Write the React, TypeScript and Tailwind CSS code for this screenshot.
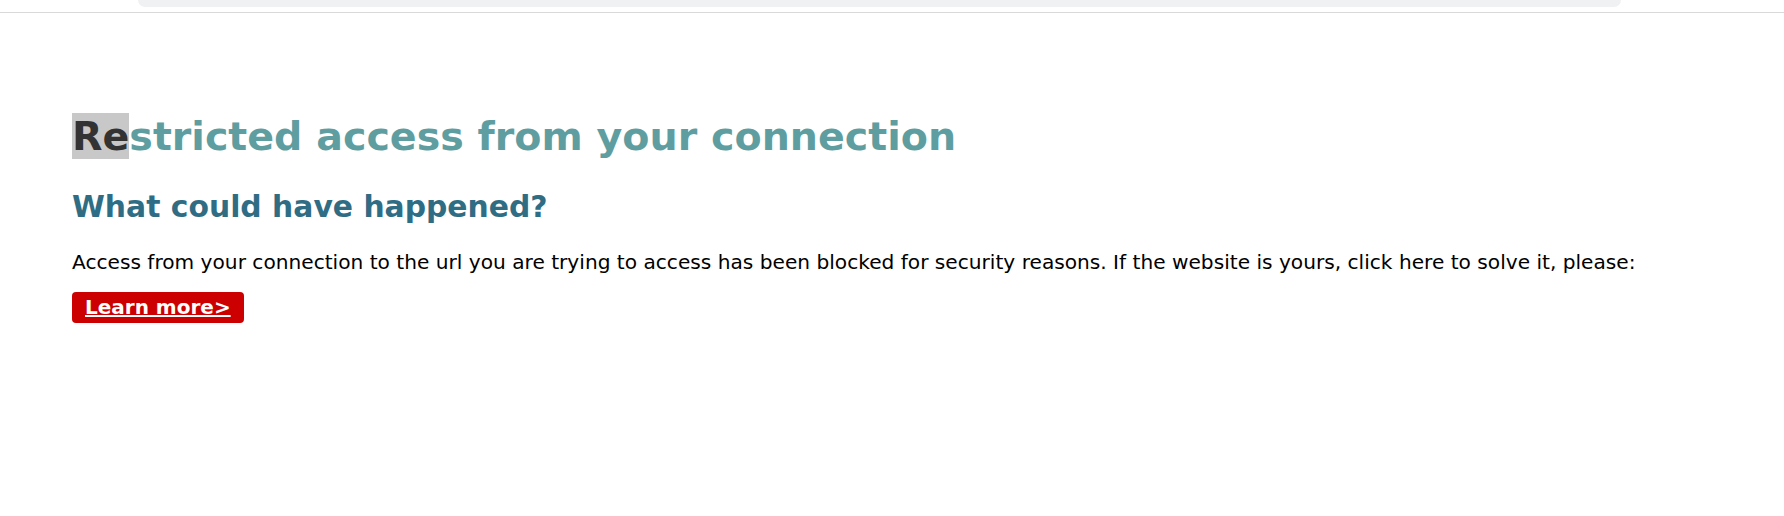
export default function App() {
  return (
    <div className="h-[516px] w-full bg-white" style={{ fontFamily: '"DejaVu Sans", Verdana, sans-serif' }}>
      {/* browser strip leftover at the top */}
      <div className="h-[12px] px-[138px] pr-[163px]">
        <div className="h-[7px] rounded-b-[8px] bg-[#f0f1f3]" />
      </div>
      <div className="h-px bg-[#d9d9d9]" />

      <div className="px-[72px] pt-[99px]">
        <h1 className="text-[39.6px] font-bold leading-[48px] text-[#5f9ea0]">
          <span className="bg-[#c8c8c8] text-[#333333]">Re</span>stricted access from your connection
        </h1>
        <h2 className="mt-[29px] text-[29.8px] font-bold leading-[36px] text-[#2f6d85]">
          What could have happened?
        </h2>
        <p className="mt-[25px] text-[20.15px] leading-[24px] text-black">
          Access from your connection to the url you are trying to access has been blocked for security reasons. If the
          website is yours, click here to solve it, please:
        </p>
        <a
          href="#"
          className="mt-[18px] inline-block rounded-[4px] bg-[#cc0000] px-[13px] text-[20px] font-bold leading-[31px] text-white underline"
        >
          Learn more&gt;
        </a>
      </div>
    </div>
  );
}
